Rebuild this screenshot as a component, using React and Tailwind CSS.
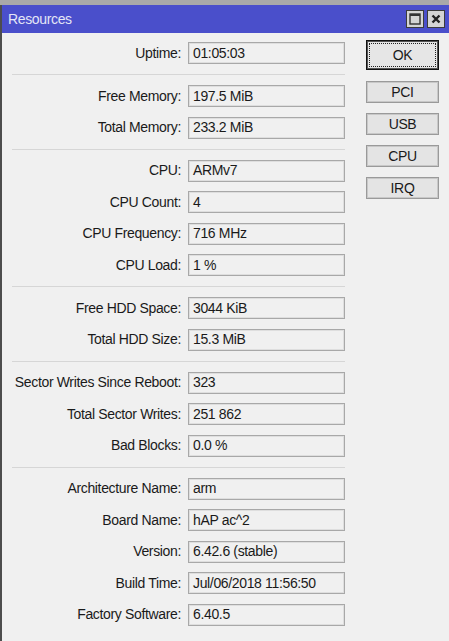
import React from "react";

const groups = [
  [["Uptime", "01:05:03"]],
  [["Free Memory", "197.5 MiB"], ["Total Memory", "233.2 MiB"]],
  [["CPU", "ARMv7"], ["CPU Count", "4"], ["CPU Frequency", "716 MHz"], ["CPU Load", "1 %"]],
  [["Free HDD Space", "3044 KiB"], ["Total HDD Size", "15.3 MiB"]],
  [["Sector Writes Since Reboot", "323"], ["Total Sector Writes", "251 862"], ["Bad Blocks", "0.0 %"]],
  [["Architecture Name", "arm"], ["Board Name", "hAP ac^2"], ["Version", "6.42.6 (stable)"], ["Build Time", "Jul/06/2018 11:56:50"], ["Factory Software", "6.40.5"]],
];

function Row({ label, value }) {
  return (
    <div className="flex items-center h-[22px]">
      <div className="w-[169px] text-right whitespace-nowrap">{label}:</div>
      <div className="ml-[7px] w-[157px] h-[22px] border border-[#a8a8a8] shadow-[inset_0_0_0_1px_#dedede] bg-[#f0f0f0] flex items-center pl-[4px] whitespace-nowrap">
        {value}
      </div>
    </div>
  );
}

function Btn({ children, className = "" }) {
  return (
    <div className={"w-[73px] h-[22px] border border-[#9a9a9a] bg-[#e4e4e4] shadow-[inset_0_0_0_1px_#c8c8c8] flex items-center justify-center " + className}>
      {children}
    </div>
  );
}

export default function App() {
  return (
    <div className="w-[449px] h-[641px] bg-[#a9a9a9] pt-[5px] overflow-hidden font-['Liberation_Sans',Arial,sans-serif] text-[14px] tracking-[-0.35px] text-[#1a1a1a]">
      <div className="h-full border-l-2 border-[#4d4d4d] flex flex-col bg-[#f0f0f0]">
        <div className="h-[28px] bg-[#4a4fcb] flex items-center pl-[6px] pr-[4px] shrink-0">
          <span className="text-[#e4e6f6] text-[14px]">Resources</span>
          <div className="ml-auto flex gap-[3px]">
            <div className="w-[18px] h-[18px] bg-[#d4d4d4] border border-[#3c3c3c] flex items-center justify-center">
              <svg width="12" height="12" viewBox="0 0 12 12">
                <rect x="1" y="1" width="10" height="10" fill="none" stroke="#333" strokeWidth="1.4" />
                <rect x="1" y="1" width="10" height="2" fill="#333" />
              </svg>
            </div>
            <div className="w-[18px] h-[18px] bg-[#d4d4d4] border border-[#3c3c3c] flex items-center justify-center">
              <svg width="12" height="12" viewBox="0 0 12 12">
                <path d="M2.5 2.5 L9.5 9.5 M9.5 2.5 L2.5 9.5" stroke="#222" strokeWidth="2.4" />
              </svg>
            </div>
          </div>
        </div>
        <div className="flex pl-[10px] pt-[7px] flex-1">
          <div className="w-[333px] flex flex-col pt-[2px]">
            {groups.map((g, gi) => (
              <div key={gi} className="flex flex-col">
                {gi > 0 && <div className="h-px bg-[#d6d6d6] my-[10px]" />}
                <div className="flex flex-col gap-[9.5px]">
                  {g.map(([l, v]) => (
                    <Row key={l} label={l} value={v} />
                  ))}
                </div>
              </div>
            ))}
          </div>
          <div className="ml-[21px] flex flex-col">
            <div className="w-[73px] h-[30px] border border-[#111] bg-[#e6e6e6] p-[2px] shadow-[inset_0_0_0_1px_#555]">
              <div className="w-full h-full border border-dotted border-[#222] flex items-center justify-center">
                OK
              </div>
            </div>
            <Btn className="mt-[11px]">PCI</Btn>
            <Btn className="mt-[10px]">USB</Btn>
            <Btn className="mt-[10px]">CPU</Btn>
            <Btn className="mt-[10px]">IRQ</Btn>
          </div>
        </div>
      </div>
    </div>
  );
}
